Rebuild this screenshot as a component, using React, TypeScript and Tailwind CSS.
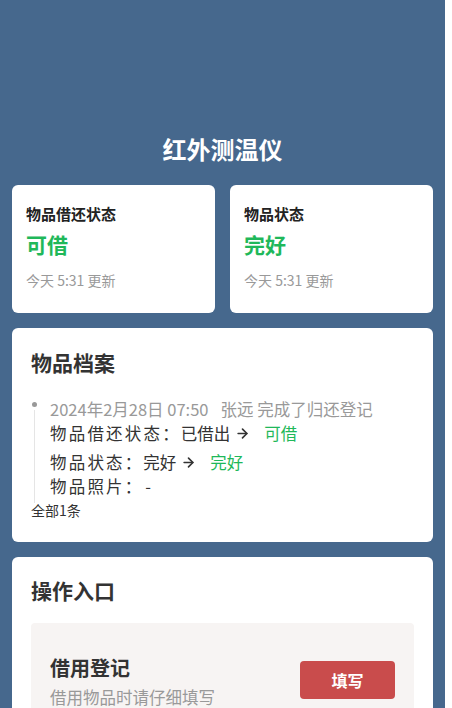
import { ArrowRight } from 'lucide-react';

function Change({ label, from, to }: { label: string; from: string; to: string }) {
  return (
    <div className="flex items-center text-[16.5px] text-[#333] leading-[26px]">
      <span className="tracking-[2.2px]">{label}</span>
      <span>：</span>
      <span className="ml-[2px]">{from}</span>
      <ArrowRight size={15} strokeWidth={2.6} className="ml-[5px] mr-[14px] text-[#333]" />
      <span className="text-[#1fb85a]">{to}</span>
    </div>
  );
}

export default function App() {
  return (
    <div className="w-[452px] h-[708px] overflow-hidden bg-white" style={{ fontFamily: '"Noto Sans CJK SC", "Noto Sans", sans-serif' }}>
      <div className="w-[445px] min-h-[708px] bg-[#46688d] px-3 pt-[132px] pb-6">
        <h1 className="text-center text-white font-bold text-[24px] leading-[34px]">红外测温仪</h1>
        <div className="mt-[19px] grid grid-cols-2 gap-[15px]">
          {[
            { label: '物品借还状态', value: '可借' },
            { label: '物品状态', value: '完好' },
          ].map((c) => (
            <div key={c.label} className="bg-white rounded-md h-[128px] px-[14px] pt-[19px]">
              <div className="text-[15px] font-bold text-[#222] leading-5">{c.label}</div>
              <div className="mt-[6px] text-[21px] font-bold text-[#1fb85a] leading-7">{c.value}</div>
              <div className="mt-[12px] text-[14px] text-[#999] leading-5">今天 5:31 更新</div>
            </div>
          ))}
        </div>

        <div className="mt-[15px] bg-white rounded-md h-[214px] pl-[19px] pr-4 pt-[20px]">
          <h2 className="text-[21px] font-bold text-[#333] leading-7">物品档案</h2>
          <div className="mt-[22px] relative pl-[19px]">
            <div className="absolute left-[1px] top-[4px] w-[5px] h-[5px] rounded-full bg-[#999]" />
            <div className="absolute left-[3px] top-[12px] bottom-[-6px] w-px bg-[#e5e5e5]" />
            <div className="text-[16.5px] text-[#999] leading-[22px]">
              2024年2月28日 07:50<span className="ml-3">张远 完成了归还登记</span>
            </div>
            <Change label="物品借还状态" from="已借出" to="可借" />
            <div className="mt-[3px]">
              <Change label="物品状态" from="完好" to="完好" />
            </div>
            <div className="flex text-[16.5px] text-[#333] leading-[22px]">
              <span className="tracking-[2.2px]">物品照片</span>
              <span>：</span>
              <span className="ml-[4px]">-</span>
            </div>
          </div>
          <div className="mt-[3px] text-[14px] text-[#333] leading-5">全部1条</div>
        </div>

        <div className="mt-[15px] bg-white rounded-md pl-[19px] pr-[19px] pt-[19px] pb-5">
          <h2 className="text-[21px] font-bold text-[#333] leading-7">操作入口</h2>
          <div className="mt-[19px] bg-[#f7f4f3] rounded-sm pl-[19px] pr-[19px] pt-[31px] pb-4 flex items-start justify-between">
            <div>
              <div className="text-[20px] font-bold text-[#333] leading-7">借用登记</div>
              <div className="mt-[3px] text-[16.5px] text-[#999] leading-6">借用物品时请仔细填写</div>
            </div>
            <button className="mt-[7px] w-[95px] h-[38px] rounded bg-[#c94c4c] text-white font-bold text-[16px]">填写</button>
          </div>
        </div>
      </div>
    </div>
  );
}
